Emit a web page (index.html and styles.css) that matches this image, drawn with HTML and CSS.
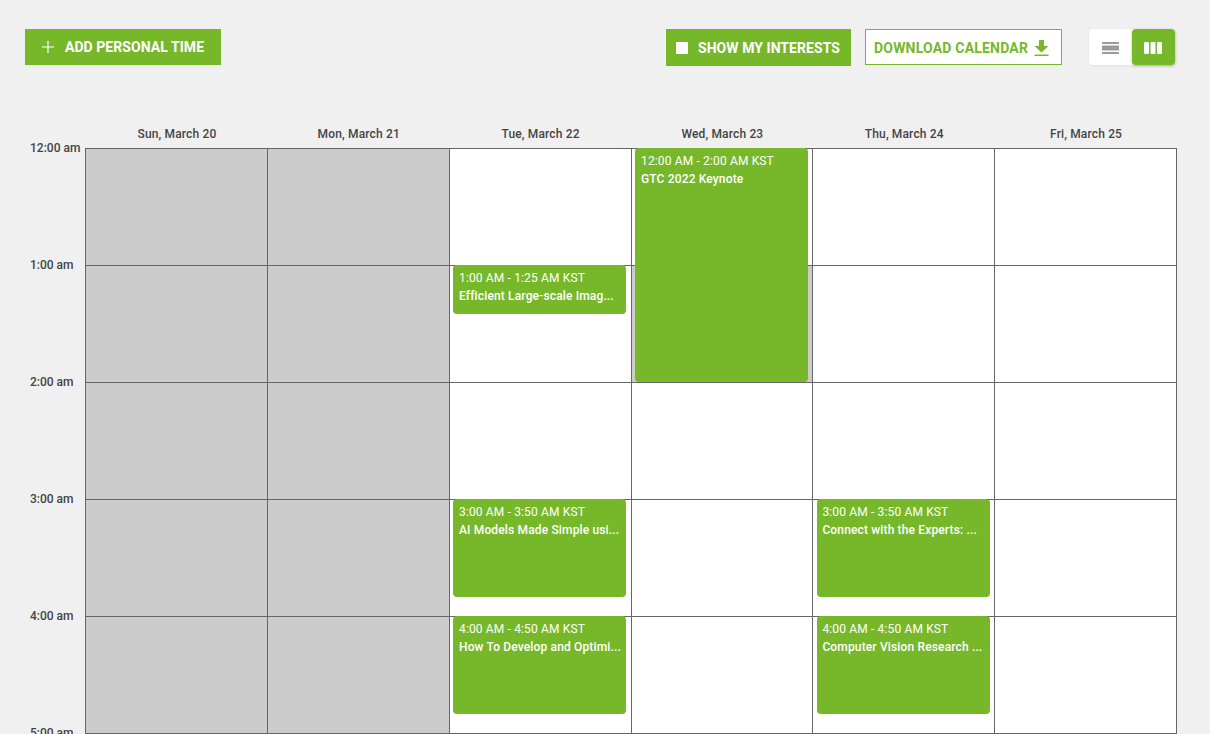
FILE: index.html
```html
<!DOCTYPE html>
<html lang="en">
<head>
<meta charset="utf-8">
<title>Schedule</title>
<link rel="stylesheet" href="styles.css">
</head>
<body>
<div class="toolbar">
  <button class="btn btn-add">
    <svg class="ico-plus" width="12" height="12" viewBox="0 0 12 12"><path d="M6 0v12M0 6h12" stroke="#fff" stroke-width="1.2" fill="none"/></svg>
    <span>ADD PERSONAL TIME</span>
  </button>
  <div class="toolbar-right">
    <button class="btn btn-interests"><span class="check"></span><span>SHOW MY INTERESTS</span></button>
    <button class="btn btn-download">
      <span>DOWNLOAD CALENDAR</span>
      <svg width="15" height="16" viewBox="0 0 15 16"><path d="M5 0h5v6h4.500L7.500 12.500 0.500 6H5z" fill="#76b82a"/><path d="M0.500 14.500h14v1.500h-14z" fill="#76b82a"/></svg>
    </button>
    <div class="toggle">
      <span class="toggle-item">
        <svg width="17" height="12" viewBox="0 0 17 12"><rect width="17" height="2" rx="0.5" fill="#9b9b9b"/><rect y="3.500" width="17" height="5" rx="0.5" fill="#9b9b9b"/><rect y="10" width="17" height="2" rx="0.5" fill="#9b9b9b"/></svg>
      </span>
      <span class="toggle-item active">
        <svg width="18" height="12" viewBox="0 0 18 12"><rect width="5" height="12" rx="1" fill="#fff"/><rect x="6.500" width="5" height="12" rx="1" fill="#fff"/><rect x="13" width="5" height="12" rx="1" fill="#fff"/></svg>
      </span>
    </div>
  </div>
</div>

<div class="days">
  <div>Sun, March 20</div><div>Mon, March 21</div><div>Tue, March 22</div><div>Wed, March 23</div><div>Thu, March 24</div><div>Fri, March 25</div>
</div>

<div class="calendar">
  <div class="times">
    <div>12:00 am</div><div>1:00 am</div><div>2:00 am</div><div>3:00 am</div><div>4:00 am</div><div>5:00 am</div>
  </div>
  <div class="grid">
    <div class="cell off"></div><div class="cell off"></div><div class="cell"></div>
    <div class="cell"><div class="event h120"><p class="when">12:00 AM - 2:00 AM KST</p><p class="what">GTC 2022 Keynote</p></div></div>
    <div class="cell"></div><div class="cell"></div>

    <div class="cell off"></div><div class="cell off"></div>
    <div class="cell"><div class="event h25"><p class="when">1:00 AM - 1:25 AM KST</p><p class="what">Efficient Large-scale Imag...</p></div></div>
    <div class="cell off"></div><div class="cell"></div><div class="cell"></div>

    <div class="cell off"></div><div class="cell off"></div><div class="cell"></div><div class="cell"></div><div class="cell"></div><div class="cell"></div>

    <div class="cell off"></div><div class="cell off"></div>
    <div class="cell"><div class="event h50"><p class="when">3:00 AM - 3:50 AM KST</p><p class="what">AI Models Made Simple usi...</p></div></div>
    <div class="cell"></div>
    <div class="cell"><div class="event h50"><p class="when">3:00 AM - 3:50 AM KST</p><p class="what">Connect with the Experts: ...</p></div></div>
    <div class="cell"></div>

    <div class="cell off"></div><div class="cell off"></div>
    <div class="cell"><div class="event h50"><p class="when">4:00 AM - 4:50 AM KST</p><p class="what">How To Develop and Optimi...</p></div></div>
    <div class="cell"></div>
    <div class="cell"><div class="event h50"><p class="when">4:00 AM - 4:50 AM KST</p><p class="what">Computer Vision Research ...</p></div></div>
    <div class="cell"></div>

    <div class="cell off"></div><div class="cell off"></div><div class="cell"></div><div class="cell"></div><div class="cell"></div><div class="cell"></div>
  </div>
</div>
</body>
</html>
```
FILE: styles.css
```css
* { box-sizing: border-box; }
html, body { margin: 0; height: 100%; overflow: hidden; }
body {
  background: #f0f0f0;
  color: #444;
  font-family: Roboto, "Liberation Sans", sans-serif;
  padding: 29px 33px 0 25px;
}
.toolbar { display: flex; justify-content: space-between; align-items: flex-start; height: 37px; margin-right: 2px; }
.toolbar-right { display: flex; align-items: flex-start; }
.btn {
  display: flex;
  align-items: center;
  height: 36px;
  border: 0;
  padding: 0;
  background: #76b82a;
  color: #fff;
  font: 700 14px Roboto, "Liberation Sans", sans-serif;
  letter-spacing: 0.05px;
  white-space: nowrap;
}
.btn-add { width: 196px; padding-left: 17px; gap: 11px; }
.btn-interests { width: 185px; height: 37px; padding: 1px 0 0 10px; gap: 10px; }
.check { width: 12px; height: 12px; background: #fff; margin-top: -1px; }
.btn-download {
  width: 197px;
  margin-left: 14px;
  padding: 1px 0 0 8px;
  gap: 6px;
  background: #fff;
  border: 1px solid #76b82a;
  color: #76b82a;
  letter-spacing: 0.2px;
}
.toggle {
  display: flex;
  margin-left: 27px;
  height: 36px;
  border-radius: 4px;
  background: #fff;
  box-shadow: 0 1px 3px rgba(0,0,0,.06);
}
.toggle-item { width: 43px; display: flex; align-items: center; justify-content: center; border-radius: 4px; padding: 1px 1px 0 0; }
.toggle-item.active { background: #76b82a; box-shadow: 0 1px 3px rgba(0,0,0,.25); }

.days {
  display: grid;
  grid-template-columns: repeat(6, 1fr);
  width: 1092px;
  margin: 61px 0 0 60px;
  height: 15px;
  padding-left: 1px;
  font-size: 12px;
  font-weight: 500;
  letter-spacing: 0.15px;
  line-height: 15px;
  text-align: center;
}
.calendar { display: flex; margin-top: 6px; }
.times { width: 60px; padding: 0 0 0 5px; margin-top: -8px; font-size: 12px; font-weight: 500; }
.times div { height: 117px; line-height: 17px; white-space: nowrap; }
.grid {
  display: grid;
  grid-template-columns: 182px 182px 182px 181.4px 181.8px 181.8px;
  grid-auto-rows: 117px;
  flex: none;
  width: 1092px;
  border-right: 1px solid #666;
  background: #fff;
}
.cell { position: relative; border-left: 1px solid #666; border-top: 1px solid #666; }
.cell.off { background: #ccc; }
.event {
  position: absolute;
  top: -1px;
  left: 3.4px;
  width: 173px;
  padding: 4px 6px 0 5.6px;
  border-radius: 4px;
  background: #76b82a;
  color: #fff;
  font-size: 12px;
  letter-spacing: 0.15px;
  z-index: 1;
}
.h25 { height: 49px; }
.h50 { height: 98px; }
.h120 { height: 234px; }
.when, .what { margin: 0; line-height: 18px; white-space: nowrap; }
.what { font-weight: 500; letter-spacing: 0.15px; }
```
